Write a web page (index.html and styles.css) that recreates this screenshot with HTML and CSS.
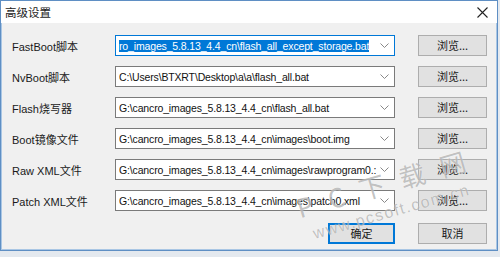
FILE: index.html
```
<!DOCTYPE html>
<html>
<head>
<meta charset="utf-8">
<link rel="stylesheet" href="styles.css">
</head>
<body>
<div class="window">
  <div class="titlebar">
    <span class="title">高级设置</span>
    <svg class="close" width="11" height="11" viewBox="0 0 11 11"><path d="M0.5 0.5L10.5 10.5M10.5 0.5L0.5 10.5" stroke="#222" stroke-width="1.1" fill="none"/></svg>
  </div>
  <div class="content">
    <div class="rows">
      <div class="row">
        <span class="label">FastBoot脚本</span>
        <div class="combo focused"><span class="value"><span class="sel">ro_images_5.8.13_4.4_cn\flash_all_except_storage.bat</span></span><svg class="arrow" width="9" height="5" viewBox="0 0 9 5"><path d="M0.5 0.5L4.5 4.5L8.5 0.5" stroke="#888" fill="none"/></svg></div>
        <button class="btn">浏览...</button>
      </div>
      <div class="row">
        <span class="label">NvBoot脚本</span>
        <div class="combo"><span class="value">C:\Users\BTXRT\Desktop\a\a\flash_all.bat</span><svg class="arrow" width="9" height="5" viewBox="0 0 9 5"><path d="M0.5 0.5L4.5 4.5L8.5 0.5" stroke="#888" fill="none"/></svg></div>
        <button class="btn">浏览...</button>
      </div>
      <div class="row">
        <span class="label">Flash烧写器</span>
        <div class="combo"><span class="value">G:\cancro_images_5.8.13_4.4_cn\flash_all.bat</span><svg class="arrow" width="9" height="5" viewBox="0 0 9 5"><path d="M0.5 0.5L4.5 4.5L8.5 0.5" stroke="#888" fill="none"/></svg></div>
        <button class="btn">浏览...</button>
      </div>
      <div class="row">
        <span class="label">Boot镜像文件</span>
        <div class="combo"><span class="value">G:\cancro_images_5.8.13_4.4_cn\images\boot.img</span><svg class="arrow" width="9" height="5" viewBox="0 0 9 5"><path d="M0.5 0.5L4.5 4.5L8.5 0.5" stroke="#888" fill="none"/></svg></div>
        <button class="btn">浏览...</button>
      </div>
      <div class="row">
        <span class="label">Raw XML文件</span>
        <div class="combo"><span class="value">G:\cancro_images_5.8.13_4.4_cn\images\rawprogram0.:</span><svg class="arrow" width="9" height="5" viewBox="0 0 9 5"><path d="M0.5 0.5L4.5 4.5L8.5 0.5" stroke="#888" fill="none"/></svg></div>
        <button class="btn">浏览...</button>
      </div>
      <div class="row">
        <span class="label">Patch XML文件</span>
        <div class="combo"><span class="value">G:\cancro_images_5.8.13_4.4_cn\images\patch0.xml</span><svg class="arrow" width="9" height="5" viewBox="0 0 9 5"><path d="M0.5 0.5L4.5 4.5L8.5 0.5" stroke="#888" fill="none"/></svg></div>
        <button class="btn">浏览...</button>
      </div>
    </div>
    <div class="actions">
      <button class="btn default">确定</button>
      <button class="btn">取消</button>
    </div>
  </div>
  <div class="watermark">
    <span class="wm-big">P C 下 载 网</span>
    <span class="wm-small">www.pcsoft.com.cn</span>
  </div>
</div>
</body>
</html>
```

FILE: styles.css
```
html, body {
  margin: 0;
  padding: 0;
}
body {
  width: 500px;
  height: 257px;
  background: #e4e9ef;
  font-family: "Liberation Sans", "Noto Sans CJK SC", sans-serif;
  font-size: 11px;
  color: #1a1a1a;
  overflow: hidden;
}
.window {
  position: relative;
  width: 496px;
  height: 249px;
  border: 1px solid #5f8fc4;
  box-shadow: inset 1px 0 0 #a9c6e4, inset -1px 0 0 #a9c6e4, inset 0 -1px 0 #a9c6e4;
  background: #f0f0f0;
  display: flex;
  flex-direction: column;
  overflow: hidden;
}
.titlebar {
  height: 22px;
  background: #ffffff;
  display: flex;
  align-items: center;
  justify-content: space-between;
  padding: 0 9px 0 4px;
  flex-shrink: 0;
}
.title {
  font-family: "Noto Sans CJK SC", sans-serif;
  font-size: 11.5px;
  color: #222;
}
.close {
  display: block;
}
.content {
  flex: 1;
  display: flex;
  flex-direction: column;
  padding: 12px 10px 0 11px;
}
.rows {
  display: flex;
  flex-direction: column;
  gap: 10px;
}
.row {
  display: flex;
  align-items: center;
  height: 21px;
}
.label {
  width: 103px;
  font-size: 11px;
  color: #1a1a1a;
  white-space: nowrap;
}
.combo {
  width: 280px;
  height: 21px;
  border: 1px solid #7a7a7a;
  background: #fff;
  display: flex;
  align-items: center;
  padding: 0 0 0 3px;
  box-sizing: border-box;
}
.combo.focused {
  border-color: #0078d7;
}
.value {
  flex: 1;
  font-size: 10.5px;
  letter-spacing: -0.15px;
  white-space: nowrap;
  overflow: hidden;
  color: #111;
}
.sel {
  background: #0078d7;
  color: #fff;
  padding: 1px 0;
}
.arrow {
  display: block;
  flex-shrink: 0;
  margin: 0 5px 0 4px;
}
.btn {
  margin-left: 23px;
  width: 69px;
  height: 21px;
  background: #e1e1e1;
  border: 1px solid #adadad;
  font-family: "Noto Sans CJK SC", sans-serif;
  font-size: 11px;
  color: #1a1a1a;
  padding: 0;
  line-height: 1;
}
.actions {
  display: flex;
  justify-content: flex-end;
  margin-top: 12px;
  padding-right: 0;
}
.btn.default {
  width: 67px;
  border: 2px solid #0078d7;
}
.watermark {
  position: absolute;
  left: 290px;
  top: 166px;
  width: 200px;
  height: 86px;
  transform: rotate(-16deg);
  pointer-events: none;
  display: flex;
  flex-direction: column;
  align-items: center;
}
.wm-big {
  font-family: "Noto Sans CJK SC", sans-serif;
  font-size: 26px;
  line-height: 30px;
  color: rgba(110, 110, 110, 0.42);
  text-shadow: 0 0 1px rgba(255, 255, 255, 0.8);
  letter-spacing: 5px;
  white-space: nowrap;
}
.wm-small {
  font-family: "Liberation Sans", sans-serif;
  font-size: 16px;
  line-height: 18px;
  color: rgba(110, 110, 110, 0.42);
  text-shadow: 0 0 1px rgba(255, 255, 255, 0.8);
  letter-spacing: 1.5px;
  margin-top: 6px;
  white-space: nowrap;
}
```
